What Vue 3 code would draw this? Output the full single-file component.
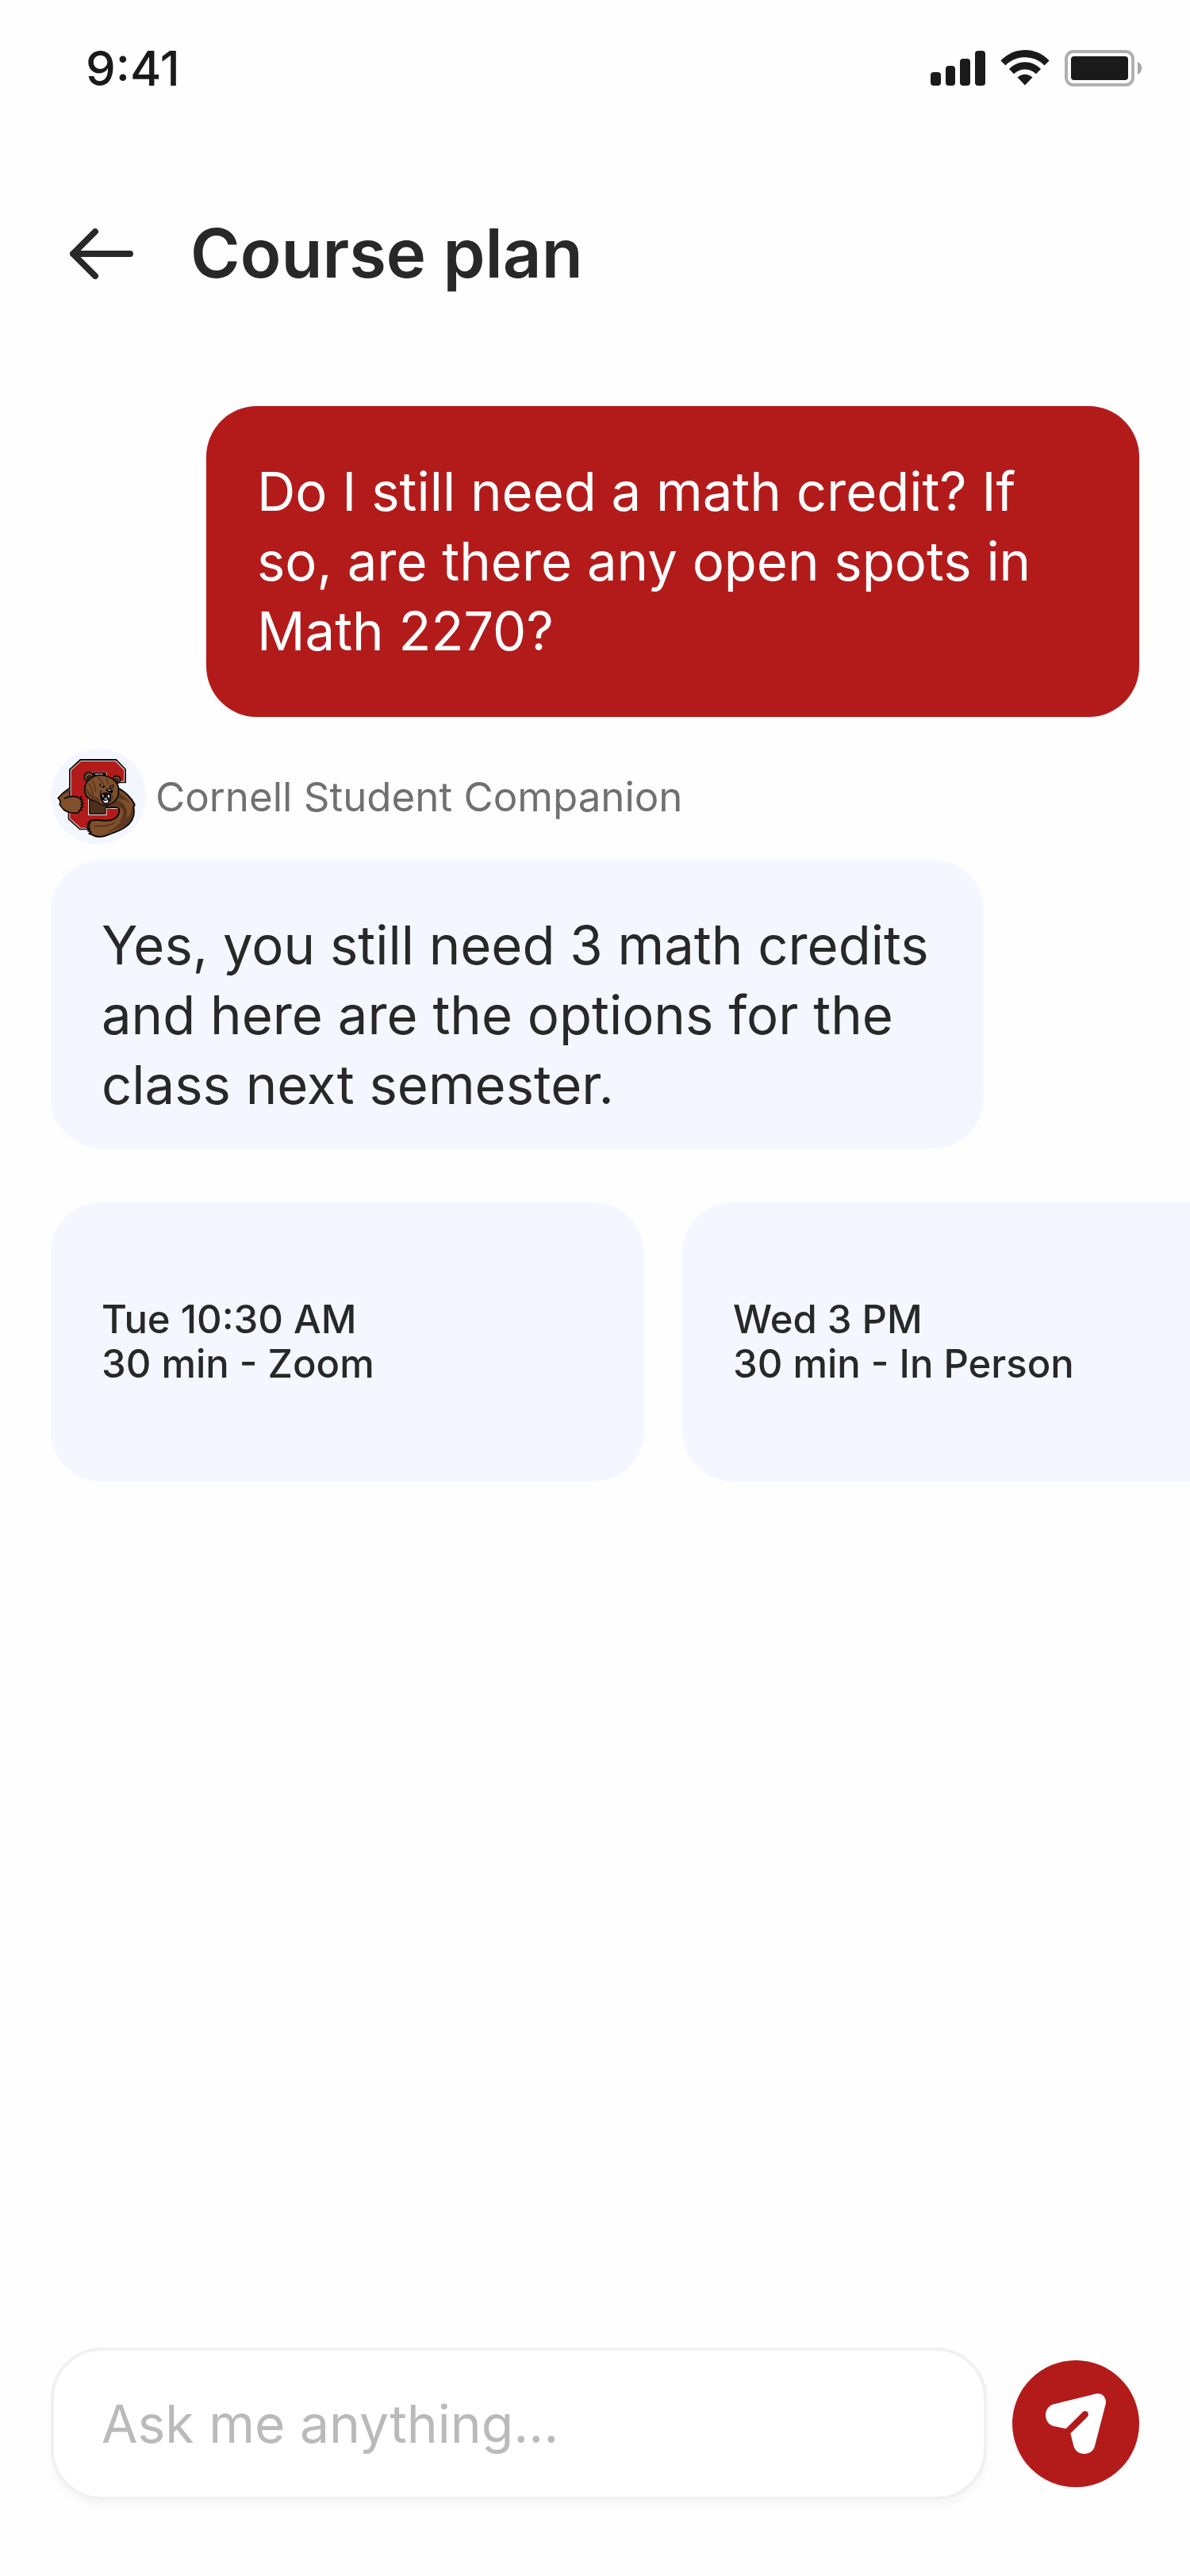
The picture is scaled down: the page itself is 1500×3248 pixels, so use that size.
<template>
  <div class="chat-screen">
    <!-- Status Bar -->
    <div class="status-bar">
      <span class="status-time">9:41</span>
      <div class="status-icons">
        <svg class="icon-signal" viewBox="0 0 69 46" aria-hidden="true">
          <rect x="0" y="28" width="13" height="17" rx="4" />
          <rect x="19" y="20" width="12" height="25" rx="4" />
          <rect x="37" y="11" width="13" height="34" rx="4" />
          <rect x="56" y="1" width="13" height="44" rx="4" />
        </svg>
        <svg class="icon-wifi" viewBox="0 0 62 46" aria-hidden="true">
          <path d="M0.4 13.5C17-4.4 45-4.4 61.6 13.5L55.5 19.4C42.5 5.7 19.5 5.7 6.5 19.4Z" />
          <path d="M11 24C22 12.3 40 12.3 51 24L45 30.3C37.5 22.6 24.5 22.6 17 30.3Z" />
          <path d="M21.5 34.6C27 29.4 35 29.4 40.5 34.6L31 44.5Z" />
        </svg>
        <svg class="icon-battery" viewBox="0 0 98 46" aria-hidden="true">
          <rect x="2" y="2" width="84" height="42" rx="9" fill="none" stroke="#b0b0b0" stroke-width="4" />
          <rect x="8" y="8" width="72" height="30" rx="4" />
          <path d="M92 15C99 18 99 28 92 31Z" fill="#a8a8a8" />
        </svg>
      </div>
    </div>

    <!-- Header -->
    <header class="chat-header">
      <button class="back-button" type="button" aria-label="Back">
        <svg viewBox="0 0 80 64" aria-hidden="true">
          <path d="M76 32H4M32 4L4 32L32 60" />
        </svg>
      </button>
      <h1 class="chat-title">Course plan</h1>
    </header>

    <!-- Conversation -->
    <main class="conversation">
      <p class="bubble bubble-user">{{ question }}</p>

      <div class="sender">
        <svg class="sender-avatar" viewBox="42 42 360 360" aria-hidden="true">
          <circle cx="222" cy="222" r="180" fill="#f3f6ff" />
          <!-- Left arm behind the letter -->
          <path d="M114 190L88 210L70 228L78 240L76 254L92 274L112 284Z" fill="#80502c" stroke="#0b0908" stroke-width="5" />
          <!-- Block letter -->
          <path d="M153 81H290L327 119V172H246V140H191V286H246V263H300V330L282 349H151L107 309V286H111V120Z" fill="#0b0908" />
          <path d="M156 87H288L322 121V167H250V136H187V290H250V266H300V327L279 344H153L112 307V286H116V122Z" fill="#e9d5d0" />
          <path d="M157 90H286L319 123V164H254V131H183V294H254V270H300V325L277 341H155L115 305V286H119V124Z" fill="#b31b1b" />
          <path d="M200 132H251V145H200Z" fill="#0b0908" />
          <path d="M210 136H238V141H210Z" fill="#a9adc6" />
          <!-- Chest and right arm -->
          <path d="M189 225V288H249V265H297L291 220Z" fill="#4f2f1b" stroke="#0b0908" stroke-width="3" />
          <path d="M192 242L248 262L300 262L296 215Z" fill="#5c3820" />
          <path d="M292 188C321 204 345 222 359 254L355 264C361 294 350 320 323 339C298 356 267 364 247 372C226 377 207 374 198 367L187 363L194 357L183 352L190 345L179 340L188 333L181 327L191 325L185 319C201 308 218 312 239 314C274 317 299 304 301 278C303 258 286 265 254 265L250 245C275 238 291 213 292 188Z" fill="#80502c" stroke="#0b0908" stroke-width="6" stroke-linejoin="round" />
          <path d="M296 202C310 218 331 228 343 248C326 234 304 230 286 235C318 241 337 267 328 305C350 288 349 268 347 253C362 286 350 315 320 335C295 347 270 351 250 364C286 338 314 322 318 295C322 270 309 256 272 261L256 261L253 247C284 236 295 221 296 202Z" fill="#5c3820" />
          <path d="M309 252C324 274 322 300 303 318M205 335C229 335 258 338 286 321" fill="none" stroke="#4b2c1a" stroke-width="4" />
          <!-- Left paw over the letter -->
          <path d="M92 230C112 222 136 219 150 229L158 225L154 235L163 236L157 244L165 249L157 255L163 264L155 266L158 275L149 275L147 284C129 286 108 284 93 273L79 253Z" fill="#80502c" />
          <path d="M92 231C112 221 136 219 150 229L158 225L154 235L163 236L157 244L165 249L157 255L163 264L155 266L158 275L149 275L147 284C129 287 107 284 91 272" fill="none" stroke="#0b0908" stroke-width="5" />
          <path d="M113 192L87 217L113 205Z" fill="#603b22" />
          <!-- Ears -->
          <ellipse cx="186" cy="149" rx="17" ry="18" fill="#80502c" stroke="#0b0908" stroke-width="5" />
          <ellipse cx="188" cy="153" rx="9" ry="10" fill="#4a2b19" stroke="#0b0908" stroke-width="3" />
          <ellipse cx="291" cy="159" rx="14" ry="14" fill="#80502c" stroke="#0b0908" stroke-width="5" />
          <ellipse cx="289" cy="162" rx="7" ry="7" fill="#4a2b19" stroke="#0b0908" stroke-width="3" />
          <!-- Head -->
          <path d="M198 151C216 138 251 139 277 158C293 169 301 187 298 209C296 229 285 244 267 251C251 260 228 255 216 243C195 238 174 226 171 207C167 184 177 162 198 151Z" fill="#80502c" stroke="#0b0908" stroke-width="5" />
          <path d="M177 190C190 211 203 223 224 228L231 248C204 237 173 224 177 190Z" fill="#603b22" />
          <path d="M195 161C207 170 211 187 212 207M184 174C194 184 199 200 202 216M221 151C231 159 238 170 242 181M253 154L259 177" fill="none" stroke="#58351f" stroke-width="5" />
          <path d="M270 213C284 216 281 235 266 245Z" fill="#603b22" />
          <!-- Eyes, nose and mouth -->
          <path d="M225 173L249 185L241 190L228 184ZM264 182L281 178L278 192L267 193Z" fill="#0b0908" />
          <path d="M231 178L241 183L234 184ZM269 185L276 183L274 189Z" fill="#dce1ed" />
          <path d="M249 197L261 191L279 200L273 211L258 207Z" fill="#0b0908" />
          <path d="M255 198L264 196L271 200L263 202Z" fill="#a0a4b5" />
          <path d="M232 198C228 210 229 221 231 228M234 213C246 206 261 210 270 215L266 238C261 248 252 254 240 248L231 232Z" fill="#0b0908" stroke="#0b0908" stroke-width="3" />
          <path d="M235 216L241 217L242 228ZM256 216L265 219L262 231ZM238 237L250 241L259 235L258 245L246 247Z" fill="#fff" />
          <path d="M242 230L254 225L257 235L249 239Z" fill="#7e8092" />
        </svg>
        <span class="sender-name">{{ assistantName }}</span>
      </div>

      <p class="bubble bubble-assistant">{{ answer }}</p>

      <div class="options">
        <button v-for="option in options" :key="option.time" class="option-card" type="button">
          <span>{{ option.time }}</span>
          <span>{{ option.details }}</span>
        </button>
      </div>
    </main>

    <!-- Composer -->
    <form class="composer" @submit.prevent="sendMessage">
      <input
        v-model="message"
        class="composer-input"
        type="text"
        placeholder="Ask me anything..."
        aria-label="Message"
      />
      <button class="send-button" type="submit" aria-label="Send">
        <svg viewBox="0 0 480 480" aria-hidden="true">
          <path d="M158 166L316 127C340 121 358 142 353 166L313 320C306 364 240 366 231 320L220 277L284 214C295 201 280 185 267 195L203 259L160 250C115 241 115 176 158 166Z" />
        </svg>
      </button>
    </form>
  </div>
</template>

<script setup>
import { ref } from 'vue';

const assistantName = 'Cornell Student Companion';
const question = 'Do I still need a math credit? If so, are there any open spots in Math 2270?';
const answer = 'Yes, you still need 3 math credits and here are the options for the class next semester.';

const options = [
  { time: 'Tue 10:30 AM', details: '30 min - Zoom' },
  { time: 'Wed 3 PM', details: '30 min - In Person' }
];

const emit = defineEmits(['send']);

const message = ref('');

const sendMessage = () => {
  if (!message.value.trim()) return;

  emit('send', message.value);
  message.value = '';
};
</script>

<style>
body {
  margin: 0;
  background-color: #fefefe;
}
</style>

<style scoped>
.chat-screen {
  display: flex;
  flex-direction: column;
  min-height: 100vh;
  overflow-x: hidden;
  background-color: #fefefe;
  color: #282828;
  font-family: Inter, sans-serif;
}

button,
input {
  box-sizing: border-box;
  margin: 0;
  font-family: inherit;
}

button {
  padding: 0;
  border: none;
  cursor: pointer;
}

.status-bar {
  display: flex;
  align-items: center;
  justify-content: space-between;
  height: 172px;
  padding: 0 60px 0 108px;
  color: #1a1a1a;
}

.status-time {
  font-size: 60px;
  font-weight: 500;
}

.status-icons {
  display: flex;
  align-items: center;
  gap: 19px;
}

.status-icons svg {
  height: 46px;
  fill: #1a1a1a;
}

.icon-signal {
  width: 69px;
}

.icon-wifi {
  width: 62px;
}

.icon-battery {
  width: 98px;
}

.chat-header {
  display: flex;
  align-items: center;
  gap: 72px;
  padding: 84px 88px 128px;
}

.back-button {
  display: flex;
  background: none;
}

.back-button svg {
  width: 80px;
  height: 64px;
  fill: none;
  stroke: #282828;
  stroke-width: 8;
  stroke-linecap: round;
  stroke-linejoin: round;
}

.chat-title {
  margin: 0;
  font-size: 85px;
  font-weight: 600;
  line-height: 128px;
}

.conversation {
  display: flex;
  flex-direction: column;
  padding: 0 64px;
}

.bubble {
  margin: 0;
  padding: 64px;
  border-radius: 64px;
  font-size: 67px;
  line-height: 88px;
}

.bubble-user {
  margin-left: 196px;
  background-color: #b31b1b;
  color: #fff;
}

.bubble-assistant {
  margin-right: 196px;
  padding-bottom: 36px;
  background-color: #f4f7ff;
}

.sender {
  display: flex;
  align-items: center;
  gap: 12px;
  margin: 40px 0 20px;
}

.sender-avatar {
  width: 120px;
  height: 120px;
}

.sender-name {
  color: #707070;
  font-size: 51px;
}

.options {
  display: flex;
  gap: 48px;
  margin: 68px -64px 0 0;
  overflow-x: auto;
  scrollbar-width: none;
}

.option-card {
  display: flex;
  flex: 0 0 748px;
  flex-direction: column;
  align-items: flex-start;
  justify-content: center;
  height: 352px;
  padding: 0 64px;
  border-radius: 64px;
  background-color: #f4f7ff;
  color: #282828;
  font-size: 49px;
  font-weight: 500;
  line-height: 56px;
}

.composer {
  display: flex;
  align-items: center;
  gap: 32px;
  margin-top: auto;
  padding: 64px 64px 96px;
}

.composer-input {
  flex: 1;
  min-width: 0;
  height: 192px;
  padding: 0 60px;
  border: 4px solid #f0f0f0;
  border-radius: 64px;
  outline: none;
  background-color: #fff;
  box-shadow: 0 8px 8px rgba(0, 0, 0, 0.03);
  color: #282828;
  font-size: 66px;
}

.composer-input::placeholder {
  color: #bababa;
  opacity: 1;
}

.composer-input:focus {
  border-color: #b31b1b;
}

.send-button {
  flex: none;
  width: 160px;
  height: 160px;
  border-radius: 50%;
  background-color: #b31b1b;
}

.send-button svg {
  display: block;
  width: 100%;
  fill: #fff;
}
</style>
